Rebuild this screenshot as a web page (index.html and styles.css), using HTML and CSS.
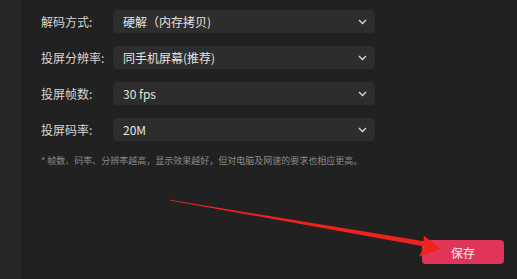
FILE: index.html
```html
<!DOCTYPE html>
<html lang="zh">
<head>
<meta charset="utf-8">
<link rel="stylesheet" href="styles.css">
</head>
<body>
<div class="app">
  <aside class="side"></aside>
  <main class="main">
    <div class="row">
      <div class="label">解码方式:</div>
      <div class="select"><span>硬解（内存拷贝)</span><svg class="chev" width="9" height="6" viewBox="0 0 9 6"><polyline points="1,1 4.5,4.5 8,1" fill="none" stroke="#d8d8d8" stroke-width="1.4"/></svg></div>
    </div>
    <div class="row">
      <div class="label">投屏分辨率:</div>
      <div class="select"><span>同手机屏幕(推荐)</span><svg class="chev" width="9" height="6" viewBox="0 0 9 6"><polyline points="1,1 4.5,4.5 8,1" fill="none" stroke="#d8d8d8" stroke-width="1.4"/></svg></div>
    </div>
    <div class="row">
      <div class="label">投屏帧数:</div>
      <div class="select"><span>30 fps</span><svg class="chev" width="9" height="6" viewBox="0 0 9 6"><polyline points="1,1 4.5,4.5 8,1" fill="none" stroke="#d8d8d8" stroke-width="1.4"/></svg></div>
    </div>
    <div class="row">
      <div class="label">投屏码率:</div>
      <div class="select"><span>20M</span><svg class="chev" width="9" height="6" viewBox="0 0 9 6"><polyline points="1,1 4.5,4.5 8,1" fill="none" stroke="#d8d8d8" stroke-width="1.4"/></svg></div>
    </div>
    <p class="note">* 帧数、码率、分辨率越高，显示效果越好，但对电脑及网速的要求也相应更高。</p>
    <div class="footer"><button class="save">保存</button></div>
  </main>
  <svg class="arrow" width="517" height="279" viewBox="0 0 517 279">
    <polygon points="170,199.8 425.4,241.6 424.6,246.4 170,200.4" fill="#f0231c"/>
    <polygon points="441,249 419,256.5 424.5,246 423.5,235.5" fill="#f0231c"/>
  </svg>
</div>
</body>
</html>
```

FILE: styles.css
```css
html, body {
  margin: 0;
  padding: 0;
  background: #222222;
  font-family: "Noto Sans CJK SC", "Noto Sans", sans-serif;
}
.app {
  position: relative;
  display: flex;
  width: 517px;
  height: 279px;
  overflow: hidden;
}
.side {
  width: 21px;
  flex: none;
  background: #272727;
}
.main {
  flex: 1;
  display: flex;
  flex-direction: column;
  padding: 10px 13px 0 20px;
  background: #212121;
}
.row {
  display: flex;
  align-items: center;
  height: 23px;
  margin-bottom: 13px;
}
.label {
  width: 72px;
  font-size: 12px;
  color: #d6d6d6;
}
.select {
  width: 262px;
  height: 23px;
  box-sizing: border-box;
  background: #2d2d2d;
  border-radius: 4px;
  display: flex;
  align-items: center;
  justify-content: space-between;
  padding: 0 8px 0 10px;
  font-size: 12px;
  color: #e2e2e2;
}
.chev {
  display: block;
}
.note {
  margin: 0;
  font-size: 9px;
  line-height: 14px;
  color: #8a8a8a;
  white-space: nowrap;
}
.footer {
  display: flex;
  justify-content: flex-end;
  margin-top: 72px;
}
.save {
  width: 82px;
  height: 24px;
  border: none;
  border-radius: 4px;
  background: #e03458;
  color: #f4f4f4;
  font-family: "Noto Sans CJK SC", sans-serif;
  font-size: 12px;
  padding: 0;
}
.arrow {
  position: absolute;
  left: 0;
  top: 0;
  pointer-events: none;
}
```
